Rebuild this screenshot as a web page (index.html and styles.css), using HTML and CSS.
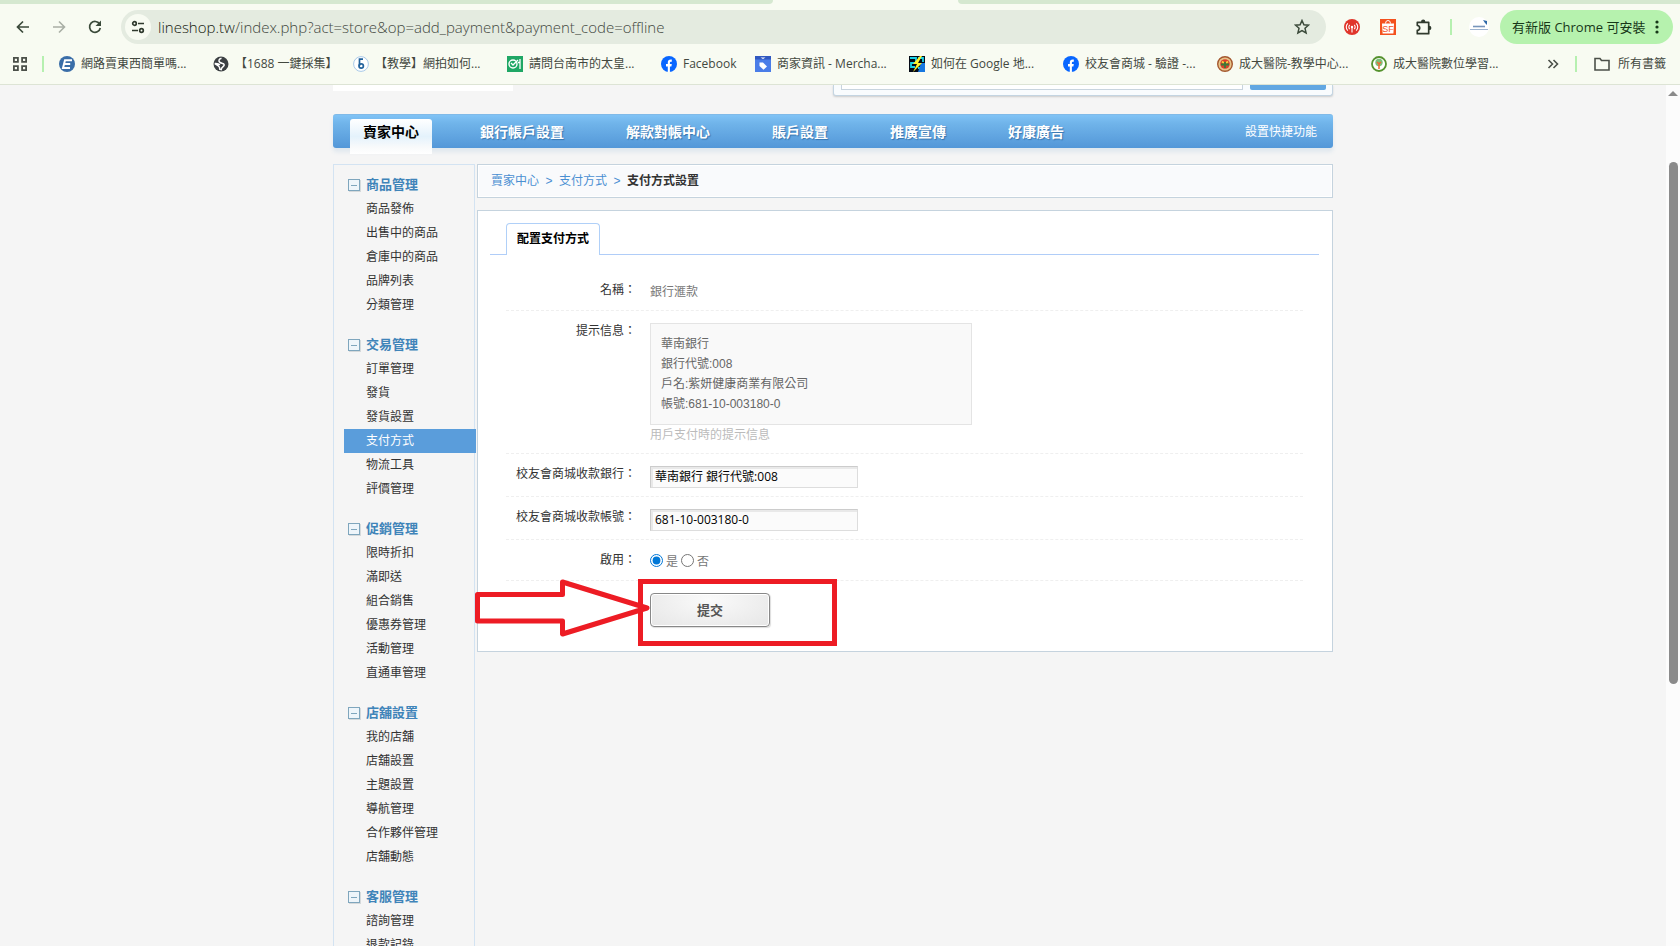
FILE: index.html
```html
<!DOCTYPE html>
<html lang="zh-Hant">
<head>
<meta charset="utf-8">
<title>支付方式設置</title>
<link rel="stylesheet" href="styles.css">
</head>
<body>
<header class="browser">
  <div class="tabstrip"><span class="strip-left"></span><span class="strip-right"></span></div>
  <div class="toolbar">
    <button class="tool" aria-label="back"><svg width="16" height="16" viewBox="0 0 16 16"><path d="M14 8H3M8 2.500L2.500 8 8 13.500" fill="none" stroke="#3b4a3a" stroke-width="1.700"/></svg></button>
    <button class="tool" aria-label="forward"><svg width="16" height="16" viewBox="0 0 16 16"><path d="M2 8h11M8 2.500L13.500 8 8 13.500" fill="none" stroke="#a9afa5" stroke-width="1.600"/></svg></button>
    <button class="tool" aria-label="reload"><svg width="16" height="16" viewBox="0 0 16 16"><path d="M12.600 5A5.400 5.400 0 1 0 13.300 9" fill="none" stroke="#3b4a3a" stroke-width="1.700"/><path d="M14 1.500V7H8.500z" fill="#3b4a3a"/></svg></button>
    <div class="address">
      <button class="site-info" aria-label="site info"><svg width="14" height="14" viewBox="0 0 14 14" fill="none" stroke="#303a2e" stroke-width="1.700"><circle cx="3.500" cy="3.500" r="1.800"/><path d="M7 3.500h6M1 10.500h6"/><circle cx="10.500" cy="10.500" r="1.800"/></svg></button>
      <div class="url"><b>lineshop.tw</b>/index.php?act=store&amp;op=add_payment&amp;payment_code=offline</div>
      <button class="star" aria-label="bookmark"><svg width="16" height="16" viewBox="0 0 16 16"><path d="M8 1.500l1.900 4.300 4.600.4-3.500 3.100 1.100 4.600L8 11.500l-4.100 2.400L5 9.300 1.500 6.200l4.600-.4z" fill="none" stroke="#3b4a3a" stroke-width="1.500"/></svg></button>
    </div>
    <div class="extensions">
      <button class="tool-ext" aria-label="antenna"><svg width="16" height="16" viewBox="0 0 16 16"><circle cx="8" cy="8" r="8" fill="#e0352b"/><g fill="none" stroke="#fff" stroke-width="1.100"><path d="M3.800 4.300a5.200 5.200 0 0 0 0 7.400M12.200 4.300a5.200 5.200 0 0 1 0 7.400M5.800 5.800a3 3 0 0 0 0 4.400M10.200 5.800a3 3 0 0 1 0 4.400M8 8v5.500"/></g><circle cx="8" cy="8" r="1.200" fill="#fff"/></svg></button>
      <button class="tool-ext" aria-label="SF"><svg width="16" height="16" viewBox="0 0 16 16"><path d="M0 0h16v16H0z" fill="#f4511e"/><path d="M5.500 4.500a2.500 3 0 0 1 5 0" fill="none" stroke="#fff"/><path d="M2 4.500h12l-.6 10H2.600z" fill="#fff"/><text x="8" y="12.800" font-family="Liberation Sans" font-size="9" text-anchor="middle" fill="#f4511e">SF</text></svg></button>
      <button class="tool-ext" aria-label="extensions"><svg width="16" height="16" viewBox="0 0 16 16"><path d="M1.300 3.300h11.400v11.400H1.300v-3.300c3.200-.2 3.200-4.700 0-4.900z" fill="none" stroke="#303a2e" stroke-width="1.700" stroke-linejoin="round"/><path d="M5 3a2.200 2.400 0 0 1 4.400 0zM13 6.700a2.400 2.200 0 0 1 0 4.400z" fill="#303a2e"/></svg></button>
      <span class="divider"></span>
      <button class="profile" aria-label="profile"><svg width="20" height="20" viewBox="0 0 20 20"><circle cx="10" cy="10" r="10" fill="#fff"/><path d="M14 3l4 1v4l-2-2z" fill="#2d68a8"/><path d="M4 9.500h12" stroke="#7795bb" stroke-width="1.600"/><path d="M1 12.500h18" stroke="#9db3cf"/></svg></button>
      <button class="update">有新版 Chrome 可安裝<svg width="4" height="14" viewBox="0 0 4 14"><g fill="#173718"><circle cx="2" cy="2" r="1.600"/><circle cx="2" cy="7" r="1.600"/><circle cx="2" cy="12" r="1.600"/></g></svg></button>
    </div>
  </div>
  <nav class="bookmarks">
    <button class="apps" aria-label="apps"><svg width="16" height="16" viewBox="0 0 16 16" fill="none" stroke="#4b5049" stroke-width="1.800"><path d="M1.900 1.900h4v4h-4zM10.100 1.900h4v4h-4zM1.900 10.100h4v4h-4zM10.100 10.100h4v4h-4z"/></svg></button>
    <span class="divider"></span>
    <div class="marks">
      <a class="mark" href="#"><svg width="16" height="16" viewBox="0 0 16 16"><circle cx="8" cy="8" r="8" fill="#3a6ea8"/><path d="M13 4.200H6L4 12h7M5.200 8.100h6" fill="none" stroke="#fff" stroke-width="2"/></svg>網路賣東西簡單嗎...</a>
      <a class="mark mark-mid" href="#"><svg width="16" height="16" viewBox="0 0 16 16"><circle cx="8" cy="8" r="7.500" fill="#3c4043"/><path d="M8.500 2.200c-2.500.6-3.500 3-1.500 4.300 1.500 1 4 .3 4.200 2.300.2 2-2.400 1.700-3 4.700l-1.400-.3c.2-2.500-1-2.900-2.200-3.900L1.800 7.500c2 .2 4 .2 5 1.400" fill="none" stroke="#fff" stroke-width="1.500"/></svg>【1688 一鍵採集】</a>
      <a class="mark" href="#"><svg width="16" height="16" viewBox="0 0 16 16"><circle cx="8" cy="8" r="7.400" fill="#fff" stroke="#a9c9e8"/><path d="M10 3.200H6.500v6.500" fill="none" stroke="#23639c" stroke-width="1.700"/><circle cx="8.200" cy="10" r="2.200" fill="none" stroke="#23639c" stroke-width="1.700"/></svg>【教學】網拍如何...</a>
      <a class="mark" href="#"><svg width="16" height="16" viewBox="0 0 16 16"><path d="M0 0h16v16H0z" fill="#1fa765"/><circle cx="6" cy="8" r="4" fill="none" stroke="#fff" stroke-width="1.400"/><path d="M4 7l2 2 5-5M13 3v10M11 6.500h2" fill="none" stroke="#fff" stroke-width="1.300"/></svg>請問台南市的太皇...</a>
      <a class="mark mark-short" href="#"><svg width="16" height="16" viewBox="0 0 16 16"><circle cx="8" cy="8" r="8" fill="#0866ff"/><path d="M6.800 16v-5.500H5V8h1.800V6.600c0-2.300 1.300-3.400 4-3v2.100c-1.500-.1-1.900.3-1.900 1.200V8h1.900l-.4 2.500H8.900V16z" fill="#fff"/></svg>Facebook</a>
      <a class="mark" href="#"><svg width="16" height="16" viewBox="0 0 16 16"><path d="M0 0h16v16H0z" fill="#4a7de8"/><path d="M0 0h16v3.500H0z" fill="#3058c0"/><path d="M5.500 1.500h5L8 3z" fill="#fff"/><path d="M4.500 6.500h3.500l4 4-3.500 3.300-4-3.800z" fill="#fff"/></svg>商家資訊 - Mercha...</a>
      <a class="mark" href="#"><svg width="16" height="16" viewBox="0 0 16 16"><path d="M0 0h16v16H0z" fill="#050b16"/><path d="M1 2h6v5H2v4h4M9 2h5v4M9 12h5V8" fill="none" stroke="#19d3e8" stroke-width="1.800"/><path d="M12 7h4v9H9z" fill="#1677e0"/><path d="M11 0L4 8h4l-4 8 9-9H9l4-7z" fill="#fff22a"/></svg>如何在 Google 地...</a>
      <a class="mark" href="#"><svg width="16" height="16" viewBox="0 0 16 16"><circle cx="8" cy="8" r="8" fill="#0866ff"/><path d="M6.800 16v-5.500H5V8h1.800V6.600c0-2.300 1.300-3.400 4-3v2.100c-1.500-.1-1.900.3-1.900 1.200V8h1.900l-.4 2.500H8.900V16z" fill="#fff"/></svg>校友會商城 - 驗證 -...</a>
      <a class="mark" href="#"><svg width="16" height="16" viewBox="0 0 16 16"><circle cx="8" cy="8" r="7.300" fill="#e8c48a" stroke="#a4582f" stroke-width="1.400"/><circle cx="8" cy="8" r="4.800" fill="#d9412b"/><path d="M5 5.500l2 1.500M11 5.500L9 7" stroke="#f4d03f" stroke-width="1.800"/><path d="M4 8.500h8M8 6v6" stroke="#3b7a38" stroke-width="1.800"/></svg>成大醫院-教學中心...</a>
      <a class="mark" href="#"><svg width="16" height="16" viewBox="0 0 16 16"><circle cx="8" cy="8" r="7" fill="#fff" stroke="#55922e" stroke-width="1.800"/><circle cx="8" cy="6.500" r="3.700" fill="#7cc07a"/><path d="M8 13V7M6 6l2 2 2-2" fill="none" stroke="#ee6a35" stroke-width="1.500"/></svg>成大醫院數位學習...</a>
    </div>
    <button class="more" aria-label="more bookmarks"><svg width="12" height="12" viewBox="0 0 12 12"><path d="M1.500 2l4 4-4 4M6.500 2l4 4-4 4" fill="none" stroke="#4b5049" stroke-width="1.600"/></svg></button>
    <span class="divider"></span>
    <a class="all-marks" href="#"><svg width="16" height="14" viewBox="0 0 16 14"><path d="M1 1.500h5l1.500 2H15v9.500H1z" fill="none" stroke="#4b5049" stroke-width="1.600"/></svg>所有書籤</a>
  </nav>
</header>

<div class="viewport">
  <div class="page">
    <div class="masthead">
      <div class="logo"></div>
      <div class="search"><span class="search-field"></span><span class="search-go"></span></div>
    </div>
    <nav class="mainnav">
      <a class="nav-on" href="#">賣家中心</a>
      <a href="#">銀行帳戶設置</a>
      <a href="#">解款對帳中心</a>
      <a href="#">賬戶設置</a>
      <a href="#">推廣宣傳</a>
      <a href="#">好康廣告</a>
      <a class="quick" href="#">設置快捷功能</a>
    </nav>
    <div class="columns">
      <aside class="sidebar">
        <section><h3>商品管理</h3><ul>
          <li><a href="#">商品發佈</a></li><li><a href="#">出售中的商品</a></li><li><a href="#">倉庫中的商品</a></li><li><a href="#">品牌列表</a></li><li><a href="#">分類管理</a></li></ul></section>
        <section><h3>交易管理</h3><ul>
          <li><a href="#">訂單管理</a></li><li><a href="#">發貨</a></li><li><a href="#">發貨設置</a></li><li><a class="current" href="#">支付方式</a></li><li><a href="#">物流工具</a></li><li><a href="#">評價管理</a></li></ul></section>
        <section><h3>促銷管理</h3><ul>
          <li><a href="#">限時折扣</a></li><li><a href="#">滿即送</a></li><li><a href="#">組合銷售</a></li><li><a href="#">優惠券管理</a></li><li><a href="#">活動管理</a></li><li><a href="#">直通車管理</a></li></ul></section>
        <section><h3>店舖設置</h3><ul>
          <li><a href="#">我的店舖</a></li><li><a href="#">店舖設置</a></li><li><a href="#">主題設置</a></li><li><a href="#">導航管理</a></li><li><a href="#">合作夥伴管理</a></li><li><a href="#">店舖動態</a></li></ul></section>
        <section><h3>客服管理</h3><ul>
          <li><a href="#">諮詢管理</a></li><li><a href="#">退款記錄</a></li></ul></section>
      </aside>
      <main class="content">
        <div class="crumbs"><a href="#">賣家中心</a><i>&gt;</i><a href="#">支付方式</a><i>&gt;</i><b>支付方式設置</b></div>
        <div class="panel">
          <div class="tabs"><a class="tab" href="#">配置支付方式</a></div>
          <form class="form">
            <div class="row"><span class="label">名稱：</span><div class="value">銀行滙款</div></div>
            <div class="row"><label class="label" for="info">提示信息：</label><div class="value"><textarea id="info" class="info" rows="4" readonly>華南銀行
銀行代號:008
戶名:紫妍健康商業有限公司
帳號:681-10-003180-0</textarea><p class="hint">用戶支付時的提示信息</p></div></div>
            <div class="row"><label class="label" for="bank">校友會商城收款銀行：</label><div class="value"><input id="bank" class="text" type="text" value="華南銀行 銀行代號:008"></div></div>
            <div class="row"><label class="label" for="account">校友會商城收款帳號：</label><div class="value"><input id="account" class="text" type="text" value="681-10-003180-0"></div></div>
            <div class="row"><span class="label">啟用：</span><div class="value radios"><input id="yes" type="radio" name="on" checked><label for="yes">是</label><input id="no" type="radio" name="on"><label for="no">否</label></div></div>
            <div class="row row-submit"><span class="label"></span><div class="value"><button class="submit" type="button">提交</button></div>
              <svg class="marker" width="370" height="80" viewBox="0 0 370 80" fill="none" stroke="#ed1c24" stroke-width="5"><path d="M166.500 7.500h194v62h-194z"/><path d="M3.500 20.500h85V8L173 34 88.500 60V47H3.500z" stroke-linejoin="round"/></svg>
            </div>
          </form>
        </div>
      </main>
    </div>
  </div>
  <div class="scrollbar"><span class="scroll-up"></span><span class="scroll-thumb"></span></div>
</div>
</body>
</html>
```

FILE: styles.css
```css
* { box-sizing: border-box; }
body {
  margin: 0;
  height: 100vh;
  display: flex;
  flex-direction: column;
  overflow: hidden;
  background: #f5f5f5;
  font: 12px/20px "Liberation Sans", "Noto Sans CJK TC", sans-serif;
  color: #333;
}
a { color: inherit; text-decoration: none; }
button { border: 0; padding: 0; background: none; font: inherit; color: inherit; }
ul, h3, p { margin: 0; padding: 0; list-style: none; }
svg { display: block; flex: none; }

/* Browser frame */
.browser {
  flex: none;
  background: #f8fbf2;
  border-bottom: 1px solid #dde4d5;
  font-family: "Open Sans", "Noto Sans CJK TC", sans-serif;
  color: #43483f;
}
.tabstrip { display: flex; justify-content: space-between; height: 4px; }
.strip-left { width: 46%; background: #d5e8d0; border-bottom-right-radius: 8px; }
.strip-right { width: 43%; background: #d5e8d0; border-bottom-left-radius: 8px; }
.toolbar { display: flex; align-items: center; height: 46px; padding: 0 7px 0 15px; }
.tool { width: 16px; margin-right: 20px; }
.address {
  flex: 1;
  display: flex;
  align-items: center;
  height: 34px;
  margin-left: -2px;
  padding: 0 16px 0 4px;
  border-radius: 17px;
  background: #e4ebe0;
}
.site-info { display: grid; place-items: center; width: 26px; height: 26px; border-radius: 50%; background: #f8fbf2; }
.url { flex: 1; padding-left: 7px; font-size: 15px; font-weight: 300; }
.url b { font-weight: 300; color: #15190f; }
.extensions { display: flex; align-items: center; }
.tool-ext { width: 16px; margin-left: 20px; }
.tool-ext:first-child { margin-left: 18px; }
.divider { width: 2px; height: 16px; background: #b6f0b0; }
.extensions .divider { margin: 0 17px 0 18px; }
.update {
  display: flex;
  align-items: center;
  justify-content: space-between;
  width: 173px;
  height: 34px;
  margin-left: 11px;
  padding: 0 14px 0 12px;
  border-radius: 17px;
  background: #b6f2ae;
  color: #173718;
  font-size: 13px;
}
.bookmarks { display: flex; align-items: center; height: 34px; padding: 0 14px 6px 12px; }
.apps { width: 16px; margin-right: 14px; }
.marks { flex: 1; display: flex; margin-left: 15px; overflow: hidden; }
.mark { display: flex; align-items: center; gap: 6px; width: 154px; white-space: nowrap; }
.mark-mid { width: 140px; }
.mark-short { width: 94px; }
.more { margin-right: 16px; }
.all-marks { display: flex; align-items: center; gap: 8px; margin-left: 17px; white-space: nowrap; }

/* Shop page */
.viewport { flex: 1; min-height: 0; display: flex; overflow: hidden; }
.page { flex: none; width: 1000px; margin: 0 auto; }
.masthead { display: flex; justify-content: space-between; align-items: flex-start; height: 29px; }
.logo { width: 180px; height: 6px; background: #fff; }
.search {
  display: flex;
  gap: 7px;
  width: 500px;
  height: 11px;
  padding: 0 6px 5px 7px;
  border: 1px solid #c4d5e2;
  border-top: 0;
  border-radius: 0 0 3px 3px;
  background: #f9fcfe;
  box-shadow: 0 1px 2px #ccc;
}
.search-field { flex: 1; border: 1px solid #c8d4de; border-top: 0; background: #fff; }
.search-go { width: 76px; border-radius: 0 0 2px 2px; background: #62a7e2; }
.mainnav {
  display: flex;
  height: 34px;
  padding: 0 16px 0 17px;
  border-top: 1px solid #80bae8;
  border-radius: 3px;
  background: linear-gradient(#80c3f6, #70b4ea 25%, #5397d8);
  box-shadow: 0 4px 4px #dfe7ee;
  color: #fff;
  font-size: 14px;
  font-weight: 700;
  line-height: 34px;
  text-shadow: 1px 1px 1px #3574ae;
}
.mainnav a { padding: 0 31px; }
.mainnav .nav-on {
  height: 35px;
  margin: 4px 17px 0 0;
  padding: 0 13px;
  border-radius: 3px 3px 0 0;
  background: linear-gradient(#fff, #e4f2fc 50%, #f8fafb 80%, #fff);
  line-height: 26px;
  color: #000;
  text-shadow: none;
}
.mainnav .quick { margin-left: auto; padding: 0; font-size: 12px; font-weight: 400; text-shadow: none; }
.columns { display: flex; align-items: stretch; gap: 2px; margin-top: 16px; }
.sidebar { flex: none; width: 142px; padding-top: 8px; border: 1px solid #d3e3f2; line-height: 24px; }
.sidebar section { margin-bottom: 16px; }
.sidebar h3 { display: flex; align-items: center; gap: 6px; padding-left: 14px; font-size: 13px; color: #3f84b9; }
.sidebar h3::before {
  content: "";
  width: 10px;
  height: 10px;
  border: 1px solid #7fa6bd;
  background: linear-gradient(#7fa6bd, #7fa6bd) center / 6px 1px no-repeat #eef5fa;
  box-shadow: 1px 1px 0 #d5d9db;
}
.sidebar ul a { display: block; margin: 0 -2px 0 10px; padding-left: 22px; }
.sidebar .current { background: #5a9ddb; color: #fff; }
.content { flex: 1; min-width: 0; }
.crumbs {
  display: flex;
  height: 34px;
  padding: 0 13px;
  border: 1px solid #c5d3de;
  background: #f9fafc;
  box-shadow: inset 0 0 0 1px #fff;
  line-height: 32px;
  color: #333;
}
.crumbs a, .crumbs i { color: #4a8fd2; font-style: normal; }
.crumbs i { width: 20px; text-align: center; }
.panel { margin-top: 12px; padding: 12px 13px 24px 12px; border: 1px solid #c5d3de; background: #fff; }
.tabs { display: flex; padding-left: 16px; border-bottom: 1px solid #b0cdf8; }
.tab {
  height: 32px;
  margin-bottom: -1px;
  padding: 0 10px;
  border: 1px solid #b0d0f8;
  border-bottom: 0;
  border-radius: 4px 4px 0 0;
  background: #fff;
  line-height: 31px;
  font-weight: 700;
  color: #000;
}
.form { padding: 15px 16px 0; }
.row { display: flex; gap: 14px; padding: 12px 0 8px; border-bottom: 1px dashed #efefef; }
.row-submit { position: relative; padding-bottom: 0; border: 0; }
.label { flex: none; width: 130px; line-height: 16px; text-align: right; white-space: nowrap; }
.value { color: #777; }
.info {
  display: block;
  width: 322px;
  height: 102px;
  padding: 10px;
  border: 1px solid #e4e4e4;
  outline: 0;
  resize: none;
  overflow: hidden;
  background: #f9f9f9;
  font: inherit;
  color: #666;
}
.hint { color: #bbb; }
.text {
  display: block;
  width: 208px;
  height: 22px;
  padding: 0 4px 2px;
  border: 1px solid #ddd;
  border-color: #ccc #ddd #ddd #ccc;
  background: #fbfbfb;
  box-shadow: inset 2px 2px 0 #e9e9e9;
  font: 12px "Open Sans", "Noto Sans CJK TC", sans-serif;
  color: #000;
}
.radios { display: flex; align-items: center; height: 20px; }
.radios input { width: 13px; height: 13px; margin: 0 3px 3px 0; accent-color: #0078d7; }
.radios label { margin-right: 3px; }
.submit {
  display: block;
  width: 120px;
  height: 34px;
  padding-top: 2px;
  border: 1px solid #888;
  border-radius: 4px;
  background: radial-gradient(ellipse at 50% 20%, #fafafa, #e6e6e6);
  box-shadow: inset 0 0 0 1px #fff, 1px 1px 1px #ddd;
  font-size: 13px;
  font-weight: 700;
  color: #555;
}
.marker { position: absolute; left: -32px; top: -7px; pointer-events: none; }
.scrollbar { display: flex; flex-direction: column; align-items: center; width: 14px; padding-top: 6px; background: #fcfcfc; }
.scroll-up { border: 5px solid transparent; border-top: 0; border-bottom: 5px solid #8b8b8b; }
.scroll-thumb { width: 9px; height: 61%; margin-top: 66px; border-radius: 5px; background: #8b8b8b; }
```
